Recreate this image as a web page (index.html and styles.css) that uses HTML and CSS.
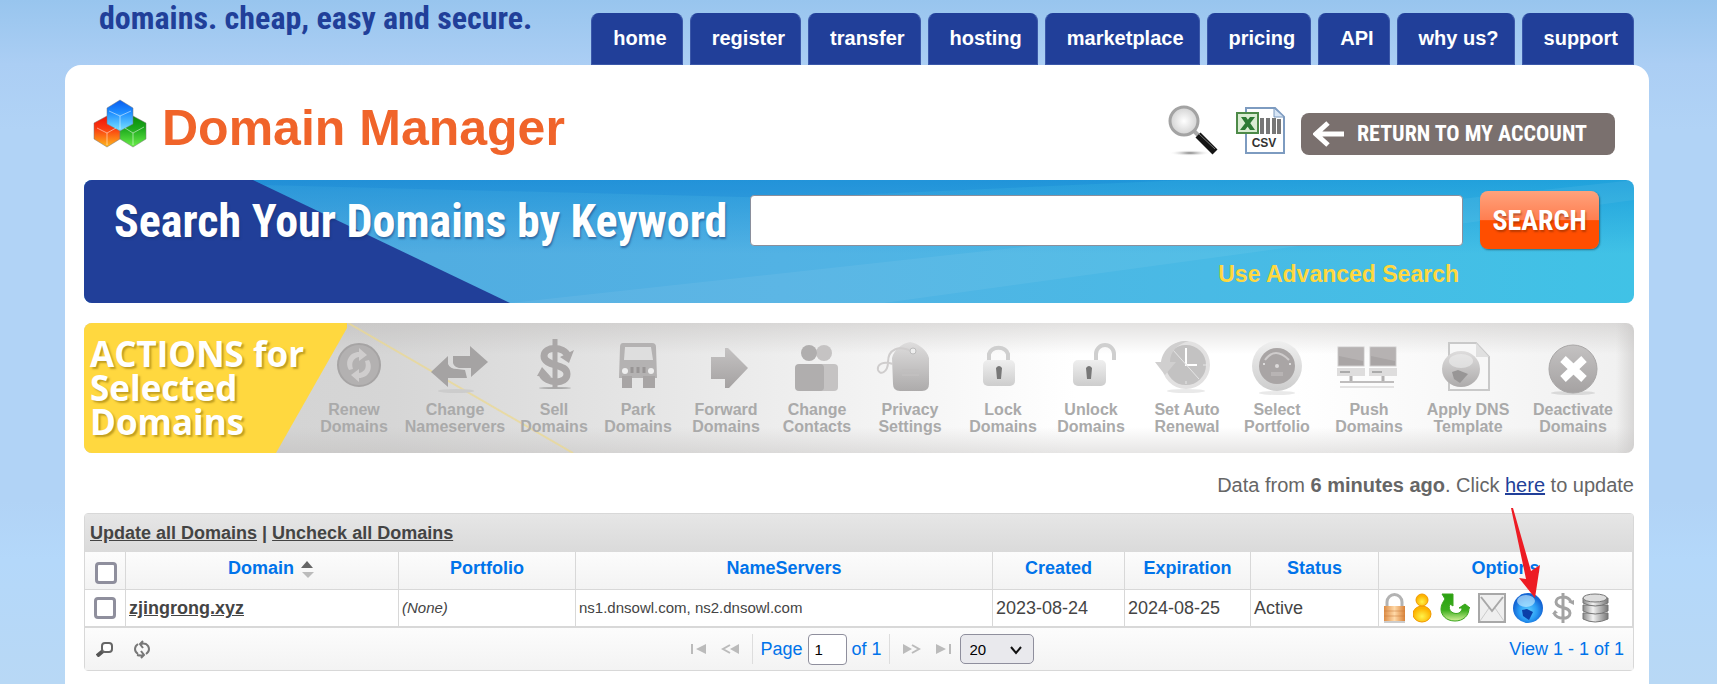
FILE: index.html
```html
<!DOCTYPE html>
<html lang="en">
<head>
<meta charset="utf-8">
<title>Domain Manager</title>
<link rel="stylesheet" href="styles.css">
</head>
<body>
<div class="page">
  <header class="masthead">
    <p class="tagline">domains. cheap, easy and secure.</p>
    <nav class="tabs">
      <a class="tab" href="#">home</a>
      <a class="tab" href="#">register</a>
      <a class="tab" href="#">transfer</a>
      <a class="tab" href="#">hosting</a>
      <a class="tab" href="#">marketplace</a>
      <a class="tab" href="#">pricing</a>
      <a class="tab" href="#">API</a>
      <a class="tab" href="#">why us?</a>
      <a class="tab" href="#">support</a>
    </nav>
  </header>

  <main class="panel">
    <div class="title-row">
      <svg class="cubes" viewBox="0 0 54 50" width="54" height="50" aria-hidden="true">
        <defs>
          <linearGradient id="cb" x1="0" y1="0" x2="0" y2="1"><stop offset="0" stop-color="#0a5cf0"/><stop offset=".4" stop-color="#1c8cff"/><stop offset="1" stop-color="#7be4ff"/></linearGradient>
          <linearGradient id="cr" x1="0" y1="0" x2="0" y2="1"><stop offset="0" stop-color="#f01208"/><stop offset=".4" stop-color="#fa3a10"/><stop offset="1" stop-color="#ffb81c"/></linearGradient>
          <linearGradient id="cg" x1="0" y1="0" x2="0" y2="1"><stop offset="0" stop-color="#0b8a0b"/><stop offset=".4" stop-color="#1ca81c"/><stop offset="1" stop-color="#6bf04a"/></linearGradient>
        </defs>
        <g stroke="#777" stroke-opacity=".5" stroke-width="1">
          <path fill="url(#cr)" d="M1 24 14 17l13 7v16l-13 8-13-8z"/>
          <path fill="url(#cg)" d="M27 24l13-7 13 7v16l-13 8-13-8z"/>
          <path fill="url(#cb)" d="M14 9 27 1l13 8v16l-13 7-13-7z"/>
        </g>
        <g fill="none" stroke="#fff" stroke-opacity=".5" stroke-width="1">
          <path d="M16 12l11 5 11-5M27 17v13M4 29l10 5 9-5M14 34v12M32 29l8 5 11-6M40 34v12"/>
        </g>
      </svg>
      <h1 class="title">Domain Manager</h1>
      <a class="tool tool-find" href="#" aria-label="Find">
        <svg viewBox="0 0 50 51" width="50" height="51" aria-hidden="true">
          <defs>
            <radialGradient id="lens"><stop offset="0" stop-color="#fff"/><stop offset="1" stop-color="#d2d2d2"/></radialGradient>
            <radialGradient id="shade"><stop offset="0" stop-color="#777"/><stop offset="1" stop-color="#fff" stop-opacity="0"/></radialGradient>
          </defs>
          <ellipse cx="22" cy="48" rx="21" ry="3" fill="url(#shade)"/>
          <path d="M25 25l7 7" stroke="#aaa" stroke-width="4"/>
          <path d="M30 30 47 47" stroke="#151515" stroke-width="7"/>
          <path d="M31 29 47 44" stroke="#777" stroke-width="1"/>
          <circle cx="16" cy="16" r="14" fill="url(#lens)" stroke="#a3a3a3" stroke-width="3"/>
        </svg>
      </a>
      <a class="tool tool-csv" href="#" aria-label="Export CSV">
        <svg viewBox="0 0 49 47" width="49" height="47" aria-hidden="true">
          <path d="M10 1h29l9 9v36H10z" fill="#fff" stroke="#7d9bc0" stroke-width="2"/>
          <path d="M38 1v9h10z" fill="#d7e5f5" stroke="#7d9bc0"/>
          <path d="M26 11v16M32 11v16M38 11v16M43 12v15" stroke="#777" stroke-width="4"/>
          <rect x="1" y="6" width="21" height="20" fill="#d9ecd2" stroke="#4d8a48" stroke-width="2"/>
          <path d="M5 10h5l9 13h-5zM14 10h5L9 23H4z" fill="#2d7a34"/>
          <text x="28" y="40" text-anchor="middle" class="csv-text">CSV</text>
        </svg>
      </a>
      <a class="return" href="#">
        <svg viewBox="0 0 32 26" width="32" height="26" aria-hidden="true"><path d="M31 13H4M15 2 3 13l12 11" fill="none" stroke="#fff" stroke-width="5"/></svg>
        RETURN TO MY ACCOUNT
      </a>
    </div>

    <form class="search">
      <svg class="search-art" viewBox="0 0 1550 123" preserveAspectRatio="none" aria-hidden="true">
        <path d="M0 0h169l257 123H0z" fill="#213f99"/>
        <path d="M426 123 1550 0v20L800 123z" fill="#fff" opacity=".06"/>
        <path d="M180 5 700 18 1100 0H169z" fill="#0878d0" opacity=".2"/>
      </svg>
      <label class="search-label" for="kw">Search Your Domains by Keyword</label>
      <div class="search-field">
        <input class="search-input" id="kw" type="text">
        <a class="advanced" href="#">Use Advanced Search</a>
      </div>
      <button class="search-btn" type="button">SEARCH</button>
    </form>

    <section class="actions">
      <svg class="actions-art" viewBox="0 0 490 130" width="490" height="130" aria-hidden="true">
        <path d="M264 0 489 130" stroke="#ecd98c" stroke-opacity=".7" stroke-width="2" fill="none"/>
        <path d="M0 0h263v5L192 130H0z" fill="#ffd83f"/>
      </svg>
      <h2 class="actions-title">ACTIONS for<br>Selected<br>Domains</h2>
      <svg width="0" height="0" class="defs" aria-hidden="true">
        <defs>
          <linearGradient id="g1" x1="0" y1="0" x2="0" y2="1"><stop offset="0" stop-color="#c4c2c2"/><stop offset="1" stop-color="#a5a2a2"/></linearGradient>
          <linearGradient id="g2" x1="0" y1="0" x2="0" y2="1"><stop offset="0" stop-color="#efefef"/><stop offset="1" stop-color="#cdcdcd"/></linearGradient>
          <linearGradient id="g3" x1="0" y1="0" x2="0" y2="1"><stop offset="0" stop-color="#dedddd"/><stop offset="1" stop-color="#adabab"/></linearGradient>
        </defs>
      </svg>
      <div class="action-list">
        <button type="button" class="action">
          <svg class="action-icon" viewBox="0 0 64 60" aria-hidden="true"><circle cx="37" cy="29" r="21" fill="#b3b1b1" stroke="#a6a4a4" stroke-width="2"/><path d="M27 34c-5-9 1-18 10-18v-4l8 7-8 6v-4c-6 1-8 6-6 12zM47 24c5 9-1 18-10 18v4l-8-7 8-6v4c6-1 8-6 6-12z" fill="#cfcdcd"/></svg>
          Renew<br>Domains</button>
        <button type="button" class="action">
          <svg class="action-icon" viewBox="0 0 64 60" aria-hidden="true"><ellipse cx="33" cy="55" rx="18" ry="2" fill="#ccc"/><path d="M30 20h17V10l18 16-17 15v-9H36q-5-1-6-5zM8 36 25 20v8q2 5 9 5l8 1 2 8H25v9z" fill="#a5a3a3"/></svg>
          Change<br>Nameservers</button>
        <button type="button" class="action">
          <svg class="action-icon" viewBox="0 0 64 60" aria-hidden="true"><ellipse cx="33" cy="52" rx="16" ry="1" fill="#aaa"/><path d="M46 20C42 10 22 10 22 20c0 11 23 7 23 18 0 11-21 10-25 0" fill="none" stroke="#aaa7a7" stroke-width="7"/><path d="M33 3v49" stroke="#aaa7a7" stroke-width="5"/><path d="M38 21l14-7-5 13zM15 40l5-9 9 10z" fill="#aaa7a7"/></svg>
          Sell<br>Domains</button>
        <button type="button" class="action">
          <svg class="action-icon" viewBox="0 0 64 60" aria-hidden="true"><path d="M17 7h29q4 0 4 4l1 31H13l1-31q0-4 3-4z" fill="#b4b2b2"/><path d="M19 11h26l2 13H18z" fill="#dedede"/><path d="M16 40h10v12H16zM37 40h12v12H37z" fill="#a8a5a5"/><circle cx="19" cy="35" r="3" fill="#eee"/><circle cx="45" cy="35" r="3" fill="#eee"/><path d="M26 31v6M32 31v6M38 31v6" stroke="#989595" stroke-width="3"/></svg>
          Park<br>Domains</button>
        <button type="button" class="action">
          <svg class="action-icon" viewBox="0 0 64 60" aria-hidden="true"><path d="M17 21h14v-9h3l20 20-19 20h-4v-9H17z" fill="url(#g1)"/></svg>
          Forward<br>Domains</button>
        <button type="button" class="action">
          <svg class="action-icon" viewBox="0 0 64 60" aria-hidden="true"><circle cx="39" cy="17" r="8" fill="#c5c3c3"/><rect x="28" y="28" width="25" height="27" rx="4" fill="#c5c3c3"/><circle cx="24" cy="17" r="8" fill="#b0aeae"/><rect x="10" y="28" width="29" height="27" rx="4" fill="#b0aeae"/></svg>
          Change<br>Contacts</button>
        <button type="button" class="action">
          <svg class="action-icon" viewBox="0 0 64 60" aria-hidden="true"><path d="M14 22C16 14 24 7 32 6c8 1 17 8 19 16v26q0 7-7 7H22q-7 0-7-7z" fill="url(#g3)"/><path d="M35 16C20 8 10 14 10 26c0 10-8 14-10 8-1-6 5-9 15-6" fill="none" stroke="#cfcdcd" stroke-width="2"/><circle cx="35" cy="15" r="3" fill="#eee" stroke="#bbb"/><path d="M24 34h17M24 39h17" stroke="#c1bfbf" stroke-width="2"/></svg>
          Privacy<br>Settings</button>
        <button type="button" class="action">
          <svg class="action-icon" viewBox="0 0 64 60" aria-hidden="true"><path d="M18 26v-8a10 9 0 0 1 19 0v8" fill="none" stroke="#cfcfcf" stroke-width="4"/><rect x="12" y="24" width="32" height="26" rx="5" fill="url(#g2)"/><path d="M25 32q3-4 6 0l-1 11h-4z" fill="#777"/></svg>
          Lock<br>Domains</button>
        <button type="button" class="action">
          <svg class="action-icon" viewBox="0 0 64 60" aria-hidden="true"><path d="M37 26v-8a9 9 0 0 1 18 0v6" fill="none" stroke="#cfcfcf" stroke-width="4"/><rect x="14" y="24" width="33" height="26" rx="5" fill="url(#g2)"/><path d="M27 32q3-4 6 0l-1 11h-4z" fill="#777"/></svg>
          Unlock<br>Domains</button>
        <button type="button" class="action">
          <svg class="action-icon" viewBox="0 0 64 60" aria-hidden="true"><ellipse cx="31" cy="55" rx="19" ry="2" fill="#e9e9e9"/><circle cx="31" cy="29" r="22" fill="#c3c2c2" stroke="#e2e1e1" stroke-width="4"/><path d="M31 12v17h11" fill="none" stroke="#fff" stroke-width="2"/><path d="M18 14l26 29M31 45v3M48 29h4" fill="none" stroke="#e6e6e6" stroke-width="1"/><path d="M34 5C20 4 8 12 6 26H0l10 13 11-13h-6c0-11 8-18 19-21z" fill="#d0cfcf"/></svg>
          Set Auto<br>Renewal</button>
        <button type="button" class="action">
          <svg class="action-icon" viewBox="0 0 64 60" aria-hidden="true"><ellipse cx="32" cy="57" rx="18" ry="2" fill="#e9e9e9"/><circle cx="32" cy="30" r="25" fill="url(#g2)"/><circle cx="32" cy="30" r="18" fill="#a9a5a5"/><path d="M20 24q10-14 24 0" fill="none" stroke="#cfcccc" stroke-width="2"/><circle cx="32" cy="30" r="2" fill="#dcdada"/><path d="M26 38h12" stroke="#b8b4b4" stroke-width="4"/><circle cx="45" cy="28" r="1" fill="#eee"/><circle cx="19" cy="28" r="1" fill="#eee"/></svg>
          Select<br>Portfolio</button>
        <button type="button" class="action">
          <svg class="action-icon" viewBox="0 0 64 60" aria-hidden="true"><g id="pc"><rect x="1" y="11" width="26" height="19" fill="#a9a5a5" stroke="#cfcdcd" stroke-width="1"/><path d="M2 12h24v13L2 20z" fill="#b6b2b2"/><rect x="0" y="32" width="28" height="8" fill="#dedddd"/><path d="M3 36h10" stroke="#aaa" stroke-width="2"/><path d="M14 40v6" stroke="#b3b1b1" stroke-width="3"/></g><use href="#pc" x="32"/><path d="M3 46h54" stroke="#bfbdbd" stroke-width="2"/><path d="M3 51h54" stroke="#e3e2e2" stroke-width="2"/></svg>
          Push<br>Domains</button>
        <button type="button" class="action">
          <svg class="action-icon" viewBox="0 0 64 60" aria-hidden="true"><path d="M13 7h27l13 14v33H13z" fill="#f7f7f7" stroke="#c9c9c9" stroke-width="2"/><path d="M40 7v14h13z" fill="#e0e0e0"/><ellipse cx="25" cy="33" rx="19" ry="18" fill="url(#g3)"/><ellipse cx="25" cy="25" rx="12" ry="7" fill="#eee" opacity=".6"/><path d="M16 36l6-2 10 4-8 9-6-4z" fill="#989696"/></svg>
          Apply DNS<br>Template</button>
        <button type="button" class="action">
          <svg class="action-icon" viewBox="0 0 64 60" aria-hidden="true"><ellipse cx="32" cy="57" rx="22" ry="2" fill="#d9d9d9"/><circle cx="32" cy="33" r="24" fill="url(#g1)" stroke="#a9a7a7"/><path d="M22 23l21 20M43 23 22 43" stroke="#fff" stroke-width="8"/></svg>
          Deactivate<br>Domains</button>
      </div>
    </section>

    <p class="freshness">Data from <b>6 minutes ago</b>. Click <a href="#">here</a> to update</p>

    <section class="grid">
      <div class="grid-caption"><a href="#">Update all Domains</a> | <a href="#">Uncheck all Domains</a></div>
      <table class="grid-table">
        <colgroup><col class="c-check"><col class="c-domain"><col class="c-portfolio"><col><col class="c-created"><col class="c-expires"><col class="c-status"><col class="c-options"></colgroup>
        <thead>
          <tr>
            <th class="check-head"><input type="checkbox" class="tick" aria-label="Select all"></th>
            <th class="domain-head">Domain <svg class="sort" viewBox="0 0 13 17" width="13" height="17" aria-hidden="true"><path d="M0 7 6 0l6 7z" fill="#666"/><path d="M1 11h12l-6 6z" fill="#bbb"/></svg></th>
            <th>Portfolio</th>
            <th>NameServers</th>
            <th>Created</th>
            <th>Expiration</th>
            <th>Status</th>
            <th class="options-head">Options
              <svg class="pointer" viewBox="0 0 30 90" width="30" height="90" aria-hidden="true"><path d="M1 0h2l18 63 9-6-5 33L9 70l7 1z" fill="#ed1c24"/></svg>
            </th>
          </tr>
        </thead>
        <tbody>
          <tr>
            <td class="check-cell"><input type="checkbox" class="tick" aria-label="Select zjingrong.xyz"></td>
            <td><a class="domain" href="#">zjingrong.xyz</a></td>
            <td class="small"><i>(None)</i></td>
            <td class="small">ns1.dnsowl.com, ns2.dnsowl.com</td>
            <td>2023-08-24</td>
            <td>2024-08-25</td>
            <td>Active</td>
            <td class="options-cell">
              <div class="options">
                <a href="#" aria-label="Lock"><svg viewBox="0 0 23 30" width="23" height="30" aria-hidden="true"><defs><linearGradient id="lk"><stop offset="0" stop-color="#dd8c45"/><stop offset=".5" stop-color="#ffd9a8"/><stop offset="1" stop-color="#d98238"/></linearGradient></defs><path d="M4 14V9a7 7 0 0 1 15 0v5" fill="none" stroke="#b3b3b3" stroke-width="3"/><rect x="1" y="13" width="21" height="15" fill="url(#lk)"/><path d="M1 18h21M1 23h21" stroke="#c97a3a" stroke-opacity=".5"/><path d="M1 29h21" stroke="#999"/></svg></a>
                <a href="#" aria-label="Contacts"><svg viewBox="0 0 19 30" width="19" height="30" aria-hidden="true"><defs><radialGradient id="ps" cy=".65"><stop offset="0" stop-color="#fff34a"/><stop offset="1" stop-color="#fdb400"/></radialGradient></defs><ellipse cx="9" cy="21" rx="9" ry="8" fill="url(#ps)" stroke="#f09a00"/><circle cx="9" cy="7" r="6" fill="url(#ps)" stroke="#f09a00"/></svg></a>
                <a href="#" aria-label="Renew"><svg class="wide" viewBox="0 0 30 30" width="30" height="30" aria-hidden="true"><defs><linearGradient id="rn" x1="0" y1="0" x2="0" y2="1"><stop offset="0" stop-color="#2aa012"/><stop offset=".6" stop-color="#3cae1e"/><stop offset="1" stop-color="#d5f19b"/></linearGradient></defs><path d="M2 1h11v12l-3-2c-3 7 4 11 9 9 2-1 3-3 3-5h-3l6-4 5 4h-1c0 8-6 13-14 13C6 28 1 22 1 16c0-4 2-7 4-10z" fill="url(#rn)" stroke="#3aa51c" stroke-width="1"/></svg></a>
                <a href="#" aria-label="Email"><svg class="wide" viewBox="0 0 28 30" width="28" height="30" aria-hidden="true"><rect x="1" y="1" width="26" height="28" fill="#efefef" stroke="#a8a8a8" stroke-width="2"/><path d="M2 28 11 15M26 28 17 15" fill="none" stroke="#ccc" stroke-width="1"/><path d="M3 4l11 14L25 4" fill="none" stroke="#a8a8a8" stroke-width="2"/></svg></a>
                <a href="#" aria-label="DNS"><svg viewBox="0 0 31 30" width="31" height="30" aria-hidden="true"><defs><radialGradient id="gl" cy=".6"><stop offset="0" stop-color="#5fd0ff"/><stop offset=".6" stop-color="#2a9cf4"/><stop offset="1" stop-color="#1465d4"/></radialGradient></defs><circle cx="15" cy="15" r="15" fill="url(#gl)"/><ellipse cx="13" cy="8" rx="9" ry="6" fill="#c7edff" opacity=".65"/><path d="M9 17l5-1 6 3-4 8-6-4z" fill="#0b3fa8"/></svg></a>
                <a href="#" aria-label="Sell"><svg viewBox="0 0 24 30" width="24" height="30" aria-hidden="true"><path d="M20 9C17 2 5 3 5 9c0 7 14 4 14 11 0 7-13 7-16 0M12 0v30" fill="none" stroke="#a3a3a3" stroke-width="3"/><path d="M17 9l6-2v5zM1 21l3-4 3 3z" fill="#a3a3a3"/></svg></a>
                <a href="#" aria-label="Records"><svg viewBox="0 0 27 30" width="27" height="30" aria-hidden="true"><defs><linearGradient id="db"><stop offset="0" stop-color="#888"/><stop offset=".4" stop-color="#f2f2f2"/><stop offset="1" stop-color="#777"/></linearGradient></defs><g stroke="#777" fill="url(#db)"><path d="M1 20v6q12 6 25 0v-6z"/><path d="M1 12v6q12 6 25 0v-6z"/><path d="M1 5v5q12 6 25 0V5z"/><ellipse cx="13" cy="5" rx="12" ry="4" fill="#ddd"/></g></svg></a>
              </div>
            </td>
          </tr>
        </tbody>
      </table>
      <div class="pager">
        <div class="pager-left">
          <button type="button" class="ico" aria-label="Find records"><svg viewBox="0 0 18 16" width="18" height="16" aria-hidden="true"><path d="M7 10 1 15" stroke="#555" stroke-width="4"/><rect x="6" y="2" width="10" height="9" rx="3" fill="#fff" stroke="#666" stroke-width="2"/></svg></button>
          <button type="button" class="ico" aria-label="Reload"><svg viewBox="0 0 16 19" width="16" height="19" aria-hidden="true"><path d="M4 14q-3-2-3-5t3-5M12 14q3-2 3-5t-3-5q-3-1-5 0M9 1 6 4l3 4M3 15q4 1 7 0M7 11l3 4-3 3" fill="none" stroke="#777" stroke-width="2"/></svg></button>
        </div>
        <div class="pager-mid">
          <button type="button" class="ico" aria-label="First page"><svg viewBox="0 0 17 10" width="17" height="10" aria-hidden="true"><path d="M1 0h2v10H1zM16 0v10L6 5z" fill="#bbb"/></svg></button>
          <button type="button" class="ico" aria-label="Previous page"><svg viewBox="0 0 19 10" width="19" height="10" aria-hidden="true"><path d="M18 0v10L9 5z" fill="#bbb"/><path d="M9 1 2 5l7 4" fill="none" stroke="#bbb" stroke-width="2"/></svg></button>
          <label class="page-box">Page <input class="page-input" type="text" value="1"> of 1</label>
          <button type="button" class="ico" aria-label="Next page"><svg viewBox="0 0 19 10" width="19" height="10" aria-hidden="true"><path d="M1 0v10l9-5z" fill="#bbb"/><path d="M10 1l7 4-7 4" fill="none" stroke="#bbb" stroke-width="2"/></svg></button>
          <button type="button" class="ico" aria-label="Last page"><svg viewBox="0 0 17 10" width="17" height="10" aria-hidden="true"><path d="M14 0h2v10h-2zM1 0v10l10-5z" fill="#bbb"/></svg></button>
          <span class="select-wrap">
            <select class="rows" aria-label="Rows per page"><option>20</option></select>
            <svg class="caret" viewBox="0 0 12 9" width="12" height="9" aria-hidden="true"><path d="M1 1l5 6 5-6" fill="none" stroke="#111" stroke-width="2"/></svg>
          </span>
        </div>
        <div class="pager-view">View 1 - 1 of 1</div>
      </div>
    </section>
  </main>
</div>
</body>
</html>
```
FILE: styles.css
```css
* { box-sizing: border-box; }

body {
  margin: 0;
  font-family: "Liberation Sans", Arial, sans-serif;
  font-size: 18px;
  color: #444;
  background: #b1d3f6 linear-gradient(#98c5ee 0, #abcef4 64px, #b1d3f6 130px, #b1d3f6 500px, #b4d8fa 560px, #b8d8f5 684px);
}

button { font-family: inherit; padding: 0; border: 0; background: none; cursor: pointer; }
svg { display: block; }

.page { padding: 0 68px 0 65px; }

.masthead {
  display: flex;
  justify-content: space-between;
  height: 65px;
  padding: 0 15px 0 34px;
}

.tagline {
  margin: 0;
  font: bold 32px/36px "Liberation Sans Narrow", "Roboto Condensed", "Liberation Sans", sans-serif;
  color: #213f99;
  white-space: nowrap;
}

.tabs { display: flex; gap: 7px; padding-top: 13px; }

.tab {
  padding: 13px 15px 0 21px;
  border: 1px solid #3b58a9;
  border-top-color: #213f99;
  border-radius: 8px 8px 0 0;
  background: #213f99;
  color: #fff;
  font-size: 20px;
  font-weight: bold;
  line-height: 22px;
  text-decoration: none;
  white-space: nowrap;
}

.panel {
  min-height: calc(100vh - 65px);
  padding: 0 15px 13px 19px;
  border-radius: 16px 16px 0 0;
  background: #fff;
}

.title-row {
  display: flex;
  align-items: flex-start;
  height: 115px;
  padding: 34px 19px 0 9px;
}

.title {
  flex: 1;
  margin: 0 0 0 15px;
  color: #f0642a;
  font-size: 50px;
  line-height: 58px;
}

.tool { padding-top: 6px; }
.tool-csv { margin: 2px 16px 0 18px; }
.csv-text { font: bold 12px "Liberation Sans", sans-serif; fill: #333; }

.return {
  display: flex;
  align-items: center;
  gap: 12px;
  height: 42px;
  margin-top: 14px;
  padding: 0 28px 0 12px;
  border-radius: 8px;
  background: #7a706e;
  color: #fff;
  font: bold 22px/26px "Liberation Sans Narrow", "Roboto Condensed", "Liberation Sans", sans-serif;
  text-decoration: none;
  white-space: nowrap;
}

.search {
  position: relative;
  display: flex;
  align-items: flex-start;
  height: 123px;
  padding: 11px 35px 0 30px;
  border-radius: 8px;
  overflow: hidden;
  background: linear-gradient(180deg, rgba(0, 130, 210, .5) 0, rgba(0, 130, 210, 0) 60%), linear-gradient(90deg, #50a8de 0, #52b2e4 45%, #40c2e6 100%);
}

.search-art { position: absolute; inset: 0; width: 100%; height: 100%; }

.search-label {
  position: relative;
  margin-right: 23px;
  color: #fff;
  font: bold 46px/60px "Liberation Sans Narrow", "Roboto Condensed", "Liberation Sans", sans-serif;
  text-shadow: 1px 2px 2px rgba(20, 50, 110, .5);
  white-space: nowrap;
}

.search-field {
  position: relative;
  flex: 1;
  display: flex;
  flex-direction: column;
  align-items: flex-end;
  gap: 15px;
  min-width: 0;
  padding-top: 4px;
}

.search-input {
  width: 100%;
  height: 51px;
  padding: 0 12px;
  border: 1px solid #8a8f9c;
  border-radius: 4px;
  background: #fff;
  font-size: 24px;
}

.advanced {
  margin-right: 4px;
  color: #ffd83f;
  font-size: 23px;
  font-weight: bold;
  line-height: 26px;
  text-decoration: none;
}

.search-btn {
  position: relative;
  width: 119px;
  height: 58px;
  margin-left: 17px;
  border-radius: 8px;
  background: linear-gradient(#ffa27c 0, #ff7e50 50%, #ff4e00 51%, #ff4e00 100%);
  box-shadow: 1px 1px 2px rgba(0, 0, 0, .4);
  color: #fff;
  font: bold 28px/60px "Liberation Sans Narrow", "Roboto Condensed", "Liberation Sans", sans-serif;
  text-shadow: 1px 2px 2px rgba(120, 40, 0, .5);
}

.actions {
  position: relative;
  display: flex;
  height: 130px;
  margin-top: 20px;
  border-radius: 8px;
  overflow: hidden;
  background:
    linear-gradient(270deg, rgba(200, 198, 197, .6) 0, rgba(200, 198, 197, 0) 18px),
    linear-gradient(180deg, rgba(185, 182, 180, .4) 0, rgba(185, 182, 180, 0) 24%, rgba(185, 182, 180, 0) 80%, rgba(185, 182, 180, .35) 100%),
    linear-gradient(90deg, #d0d0d0 0, #d6d6d6 20%, #e9e9e9 40%, #fff 64%, #fff 78%, #f0f0f0 100%);
}

.actions-art { position: absolute; left: 0; top: 0; }
.defs { position: absolute; }

.actions-title {
  position: relative;
  flex: none;
  width: 220px;
  margin: 0;
  padding: 14px 0 0 6px;
  color: #fff;
  font: bold 35px/34px "Open Sans", "Noto Sans", sans-serif;
  text-shadow: 2px 2px 2px rgba(130, 100, 0, .5);
  white-space: nowrap;
}

.action-list {
  position: relative;
  flex: 1;
  display: grid;
  grid-template-columns: 100fr 102fr 96fr 72fr 104fr 78fr 108fr 78fr 98fr 94fr 86fr 98fr 100fr 110fr;
  align-items: start;
  padding: 13px 6px 0 0;
}

.action {
  color: #aaa;
  font-size: 16px;
  font-weight: bold;
  line-height: 17px;
  text-align: center;
  white-space: nowrap;
}

.action-icon { width: 64px; height: 60px; margin: 0 auto 5px; overflow: visible; }

.freshness {
  margin: 20px 0 16px;
  color: #666;
  font-size: 20px;
  line-height: 24px;
  text-align: right;
}
.freshness a { color: #213f99; }

.grid {
  border: 1px solid #d8d8d8;
  border-radius: 4px;
  background: #fff;
}

.grid-caption {
  height: 38px;
  padding: 0 5px;
  background: linear-gradient(#e6e6e6, #dadada);
  font-weight: bold;
  line-height: 39px;
}
.grid-caption a { color: #444; }

.grid-table {
  width: 100%;
  table-layout: fixed;
  border-collapse: separate;
  border-spacing: 0;
  border-bottom: 1px solid #d8d8d8;
}

.c-check { width: 41px; }
.c-domain { width: 273px; }
.c-portfolio { width: 177px; }
.c-created { width: 132px; }
.c-expires { width: 126px; }
.c-status { width: 128px; }
.c-options { width: 254px; }

.grid-table th, .grid-table td {
  border-right: 1px solid #d8d8d8;
  border-bottom: 1px solid #d8d8d8;
}

.grid-table th {
  height: 38px;
  padding: 5px 0 0;
  background: linear-gradient(#fcfcfc, #f3f3f3);
  color: #0073ea;
  line-height: 22px;
  text-align: center;
  vertical-align: top;
}

.grid-table td {
  height: 37px;
  padding: 0 0 0 3px;
  line-height: 22px;
  vertical-align: middle;
  white-space: nowrap;
}

.grid-table .small { font-size: 15px; }
.grid-table .domain-head { padding-left: 18px; }
.grid-table .check-head { padding: 10px 0 0 2px; }
.grid-table .check-cell { padding: 0; text-align: center; }

.tick {
  appearance: none;
  display: block;
  width: 22px;
  height: 22px;
  margin: 0 auto;
  border: 3px solid #8f8f9d;
  border-radius: 4px;
  background: #fff;
}

.sort { display: inline-block; margin-left: 2px; vertical-align: -4px; }
.domain { color: #444; font-weight: bold; }

.options-head { position: relative; }
.pointer { position: absolute; right: 92px; top: -44px; overflow: visible; }

.grid-table .options-cell { padding-left: 4px; }
.options { display: flex; gap: 7px; }
.wide { margin-left: 1px; }

.pager {
  display: grid;
  grid-template-columns: 1fr auto 1fr;
  align-items: center;
  height: 42px;
  padding: 0 9px 0 11px;
  background: linear-gradient(#fcfcfc, #f3f3f3);
  color: #0073ea;
}

.pager-left { display: flex; align-items: center; gap: 20px; }
.pager-mid { display: flex; align-items: center; gap: 14px; padding-left: 4px; }

.page-box {
  display: flex;
  align-items: center;
  gap: 5px;
  height: 30px;
  margin: 0 -2px;
  padding: 0 7px;
  border: solid #ddd;
  border-width: 0 1px;
}

.page-input {
  width: 39px;
  height: 31px;
  padding: 0 6px;
  border: 1px solid #8f8f9d;
  border-radius: 4px;
  font: 15px "Liberation Sans", sans-serif;
}

.select-wrap { position: relative; display: block; margin-left: -6px; }
.rows {
  appearance: none;
  display: block;
  width: 74px;
  height: 30px;
  padding: 0 9px;
  border: 1px solid #8f8f9d;
  border-radius: 5px;
  background: #e9e9ed;
  color: #000;
  font: 15px "Liberation Sans", sans-serif;
}
.caret { position: absolute; right: 12px; top: 12px; pointer-events: none; }

.pager-view { text-align: right; }
```
